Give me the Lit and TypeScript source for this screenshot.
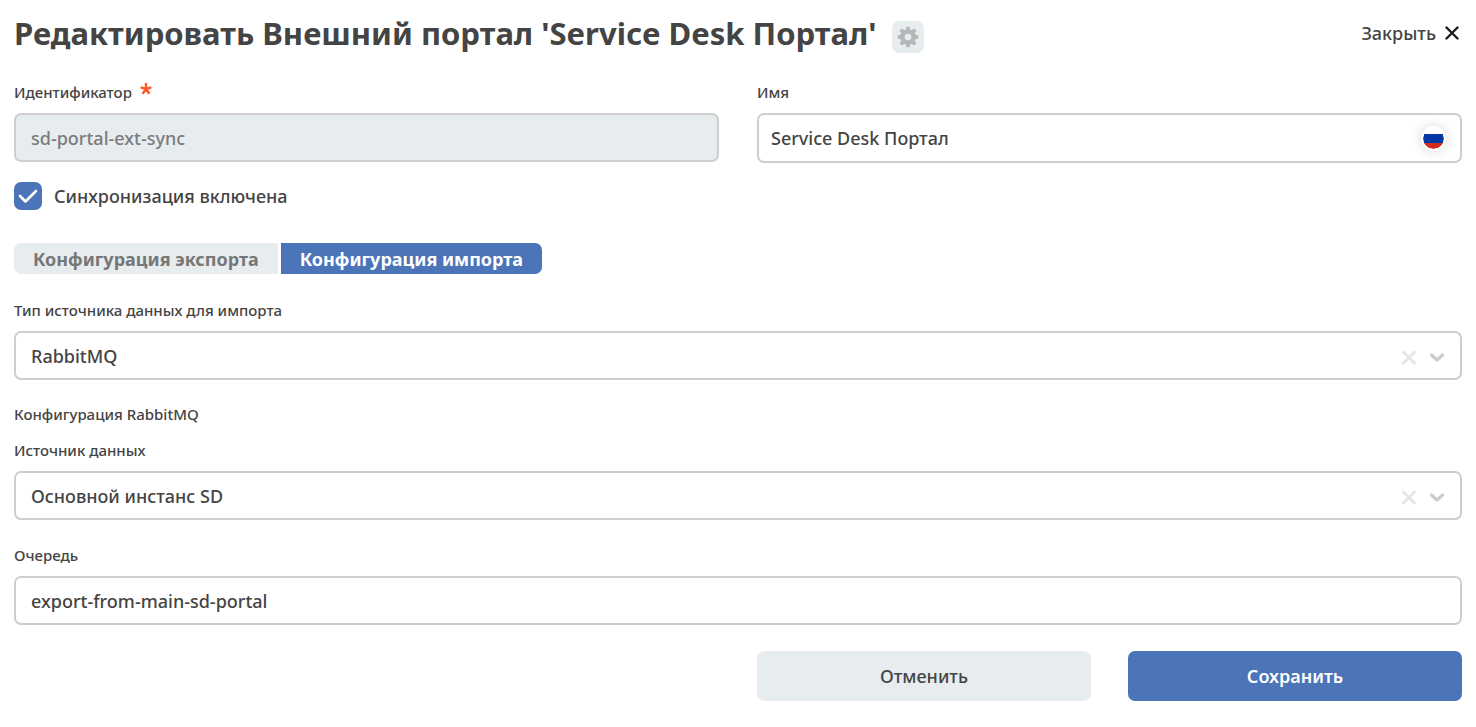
import { LitElement, html, css } from "lit";
import { customElement, property, state } from "lit/decorators.js";

const controlStyles = css`
  * {
    box-sizing: border-box;
  }
  .label {
    display: flex;
    align-items: center;
    gap: 8px;
    height: 20px;
    margin-bottom: 11px;
    font-size: 15px;
    line-height: 20px;
    font-weight: 500;
    color: #444;
  }
  .control {
    display: block;
    width: 100%;
    height: 49px;
    margin: 0;
    padding: 0 15px;
    border: 2px solid #cecece;
    border-radius: 7px;
    background: #fff;
    color: #444;
    font-family: inherit;
    font-size: 18px;
    font-weight: 500;
    outline: none;
  }
  .control:focus-visible {
    border-color: #4b74b9;
  }
`;

@customElement("text-field")
export class TextField extends LitElement {
  @property() label = "";
  @property() value = "";
  @property({ type: Boolean }) required = false;
  @property({ type: Boolean }) disabled = false;
  @property({ type: Boolean }) localized = false;

  static styles = [
    controlStyles,
    css`
      :host {
        display: block;
      }
      .control:disabled {
        background: #e7ecef;
        color: #7b7b7b;
        opacity: 1;
      }
      .control.localized {
        height: 50px;
        padding: 0 52px 0 12px;
      }
      .star {
        width: 12px;
        height: 20px;
      }
      .box {
        position: relative;
      }
      .flag {
        position: absolute;
        top: 13px;
        right: 16px;
        width: 25px;
        height: 25px;
        padding: 0;
        border: 2px solid #fff;
        border-radius: 50%;
        background: #fff;
        box-shadow: 0 0 12px rgba(0, 0, 0, 0.16);
        overflow: hidden;
        cursor: pointer;
      }
      .flag svg {
        display: block;
        border-radius: 50%;
      }
    `,
  ];

  render() {
    return html`
      <label class="label" for="input">
        ${this.label}
        ${this.required
          ? html`<svg class="star" viewBox="0 0 12 20" aria-hidden="true">
              <path
                d="M6 1V7M6 7L.6 5.400M6 7L11.400 5.400M6 7L2.600 11.700M6 7L9.400 11.700"
                stroke="#fc5b28"
                stroke-width="2.400"
                fill="none"
              />
            </svg>`
          : ""}
      </label>
      <div class="box">
        <input
          id="input"
          class="control ${this.localized ? "localized" : ""}"
          type="text"
          .value=${this.value}
          ?required=${this.required}
          ?disabled=${this.disabled}
        />
        ${this.localized
          ? html`<button class="flag" type="button" aria-label="Русский">
              <svg width="21" height="21" viewBox="0 0 21 21">
                <rect width="21" height="7" fill="#fff" />
                <rect y="6" width="21" height="9" fill="#0039a6" />
                <rect y="15" width="21" height="6" fill="#d52b1e" />
              </svg>
            </button>`
          : ""}
      </div>
    `;
  }
}

@customElement("select-field")
export class SelectField extends LitElement {
  @property() label = "";
  @property() value = "";

  static styles = [
    controlStyles,
    css`
      :host {
        display: block;
      }
      .box {
        position: relative;
      }
      select.control {
        appearance: none;
        padding-right: 72px;
      }
      .clear,
      .arrow {
        position: absolute;
        top: 18px;
        width: 16px;
        height: 16px;
      }
      .clear {
        right: 45px;
        padding: 0;
        border: 0;
        background: none;
        cursor: pointer;
      }
      .clear svg {
        display: block;
      }
      .arrow {
        right: 17px;
        pointer-events: none;
      }
    `,
  ];

  render() {
    return html`
      <label class="label" for="select">${this.label}</label>
      <div class="box">
        <select id="select" class="control">
          <option selected>${this.value}</option>
        </select>
        <button class="clear" type="button" aria-label="Очистить">
          <svg width="16" height="16" viewBox="0 0 16 16">
            <path
              d="M2.500 3L13.500 14M13.500 3L2.500 14"
              stroke="#e6e6e6"
              stroke-width="2.900"
              stroke-linecap="round"
            />
          </svg>
        </button>
        <svg class="arrow" viewBox="0 0 16 16" aria-hidden="true">
          <path
            d="M2.500 6L8 11L13.500 6"
            fill="none"
            stroke="#cccccc"
            stroke-width="3.200"
            stroke-linecap="round"
            stroke-linejoin="round"
          />
        </svg>
      </div>
    `;
  }
}

type Tab = "export" | "import";

@customElement("app-root")
export class AppRoot extends LitElement {
  @state() private tab: Tab = "import";
  @state() private syncEnabled = true;

  static styles = css`
    * {
      box-sizing: border-box;
    }
    :host {
      display: block;
      padding: 13px 14px 26px;
      background: #fff;
      color: #444;
      font-family: "Noto Sans", "Open Sans", sans-serif;
      font-size: 18px;
      font-weight: 500;
    }
    button {
      font: inherit;
      border: 0;
      cursor: pointer;
    }
    .header {
      display: flex;
      justify-content: space-between;
      align-items: flex-start;
      margin-bottom: 27px;
    }
    .heading {
      display: flex;
      align-items: flex-end;
      gap: 16px;
      padding-bottom: 2px;
    }
    .title {
      margin: 0;
      font-size: 31px;
      line-height: 40px;
      font-weight: 700;
    }
    .gear {
      display: grid;
      place-items: center;
      flex: none;
      width: 32px;
      height: 32px;
      padding: 0;
      border-radius: 7px;
      background: #e7ecef;
    }
    .close {
      display: flex;
      align-items: center;
      gap: 9px;
      padding: 0 3px 0 0;
      background: none;
      color: #444;
      line-height: 40px;
    }
    .columns {
      display: grid;
      grid-template-columns: 1fr 1fr;
      gap: 38px;
    }
    .check {
      display: flex;
      align-items: center;
      gap: 12px;
      width: fit-content;
      margin-top: 19px;
      line-height: 28px;
    }
    .check input {
      appearance: none;
      width: 28px;
      height: 28px;
      margin: 0;
      border: 2px solid #cecece;
      border-radius: 7px;
    }
    .check input:checked {
      border: 0;
      background: #4b74b9;
    }
    .tick {
      display: grid;
    }
    .tick > * {
      grid-area: 1 / 1;
    }
    .tick svg {
      pointer-events: none;
    }
    .tabs {
      display: flex;
      gap: 3px;
      margin: 33px 0 26px;
    }
    .tab {
      height: 31px;
      padding: 0 19px;
      background: #e7ecef;
      color: #777;
      font-weight: 700;
      line-height: 32px;
    }
    .tab:first-child {
      border-radius: 7px 0 0 7px;
    }
    .tab:last-child {
      border-radius: 0 7px 7px 0;
    }
    .tab.active {
      background: #4b74b9;
      color: #fff;
    }
    .section {
      margin: 24px 0 16px;
      font-size: 15px;
      line-height: 20px;
      font-weight: 500;
    }
    .queue {
      margin-top: 25px;
    }
    .actions {
      display: grid;
      grid-template-columns: 1fr 1fr;
      gap: 37px;
      grid-column: 2;
    }
    .footer {
      margin-top: 26px;
    }
    .button {
      height: 50px;
      border-radius: 7px;
      background: #e7ecef;
      color: #444;
    }
    .button.primary {
      background: #4b74b9;
      color: #fff;
      font-weight: 600;
    }
  `;

  private renderTab(id: Tab, text: string) {
    const active = this.tab === id;
    return html`<button
      class="tab ${active ? "active" : ""}"
      type="button"
      role="tab"
      aria-selected=${active ? "true" : "false"}
      @click=${() => (this.tab = id)}
    >
      ${text}
    </button>`;
  }

  render() {
    return html`
      <header class="header">
        <div class="heading">
          <h1 class="title">Редактировать Внешний портал 'Service Desk Портал'</h1>
          <button class="gear" type="button" aria-label="Настройки">
            <svg width="22" height="22" viewBox="0 0 22 22">
              <g fill="#b7b7b7">
                <path
                  fill-rule="evenodd"
                  d="M11 3.300a7.700 7.700 0 1 0 0 15.400a7.700 7.700 0 1 0 0-15.400zM11 7.700a3.300 3.300 0 1 1 0 6.600a3.300 3.300 0 1 1 0-6.600z"
                />
                <path
                  d="M8.800 4l.6-3.300h3.200l.6 3.300zM8.800 18l.6 3.300h3.200l.6-3.300zM4 8.800l-3.300.6v3.200l3.300.6zM18 8.800l3.300.6v3.200l-3.300.6z"
                />
                <path
                  d="M7.500 4.300L4.800 2.600L2.600 4.800L4.300 7.500zM14.500 4.300L17.200 2.600L19.400 4.800L17.700 7.500zM7.500 17.700L4.800 19.400L2.600 17.200L4.300 14.500zM14.500 17.700L17.200 19.400L19.400 17.200L17.700 14.500z"
                />
              </g>
            </svg>
          </button>
        </div>
        <button class="close" type="button">
          Закрыть
          <svg width="14" height="14" viewBox="0 0 14 14" aria-hidden="true">
            <path
              d="M1.500 1.500L12.500 12.500M12.500 1.500L1.500 12.500"
              stroke="#1d1d1d"
              stroke-width="2.400"
              stroke-linecap="round"
            />
          </svg>
        </button>
      </header>

      <form @submit=${(e: Event) => e.preventDefault()}>
        <div class="columns">
          <text-field label="Идентификатор" value="sd-portal-ext-sync" required disabled></text-field>
          <text-field label="Имя" value="Service Desk Портал" localized></text-field>
        </div>

        <label class="check">
          <span class="tick">
            <input
              type="checkbox"
              .checked=${this.syncEnabled}
              @change=${(e: Event) => (this.syncEnabled = (e.target as HTMLInputElement).checked)}
            />
            <svg width="28" height="28" viewBox="0 0 28 28" aria-hidden="true">
              <path
                d="M6 14L11.500 19.500L22 9"
                fill="none"
                stroke="#fff"
                stroke-width="2.600"
                stroke-linecap="round"
                stroke-linejoin="round"
              />
            </svg>
          </span>
          Синхронизация включена
        </label>

        <div class="tabs" role="tablist">
          ${this.renderTab("export", "Конфигурация экспорта")}
          ${this.renderTab("import", "Конфигурация импорта")}
        </div>

        <select-field label="Тип источника данных для импорта" value="RabbitMQ"></select-field>
        <h2 class="section">Конфигурация RabbitMQ</h2>
        <select-field label="Источник данных" value="Основной инстанс SD"></select-field>
        <text-field class="queue" label="Очередь" value="export-from-main-sd-portal"></text-field>

        <div class="columns footer">
          <div class="actions">
            <button class="button" type="button">Отменить</button>
            <button class="button primary" type="submit">Сохранить</button>
          </div>
        </div>
      </form>
    `;
  }
}
